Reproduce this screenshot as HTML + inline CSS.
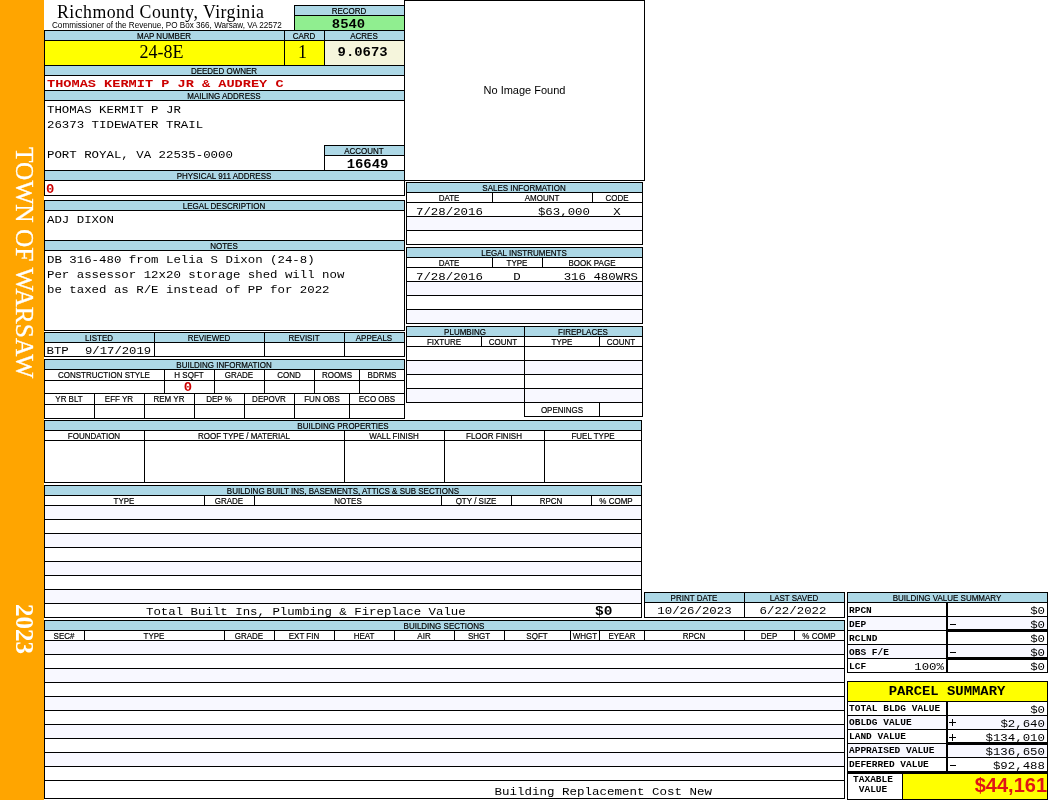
<!DOCTYPE html>
<html><head><meta charset="utf-8"><title>Property Card</title>
<style>
html,body{margin:0;padding:0;background:#fff;overflow:hidden;}
body{width:1050px;height:800px;position:relative;overflow:hidden;font-family:"Liberation Sans",sans-serif;color:#000;}
#pg{position:absolute;left:0;top:0;width:1050px;height:800px;will-change:transform;overflow:hidden;}
.b{position:absolute;box-sizing:border-box;border:1px solid #000;}
.f{position:absolute;}
.t{position:absolute;white-space:nowrap;}
.sans{font-family:"Liberation Sans",sans-serif;}
.serif{font-family:"Liberation Serif",serif;}
.mono{font-family:"Liberation Mono",monospace;}
.v{position:absolute;writing-mode:vertical-rl;font-family:"Liberation Serif",serif;color:#fff;white-space:nowrap;line-height:24px;}
</style></head><body><div id="pg">
<div class="f" style="left:0px;top:0px;width:44px;height:800px;background:#ffa500"></div>
<div class="v" style="left:13px;top:147px;font-size:25.4px;-webkit-text-stroke:0.3px #fff;">TOWN OF WARSAW</div>
<div class="v" style="left:12px;top:604px;font-size:25px;font-weight:bold;">2023</div>
<div class="t serif" style="top:2px;font-size:17.8px;line-height:20px;height:20px;letter-spacing:0.45px;left:57px;">Richmond County, Virginia</div>
<div class="t sans" style="top:21px;font-size:8.15px;line-height:9px;height:9px;left:52px;">Commissioner of the Revenue, PO Box 366, Warsaw, VA 22572</div>
<div class="b" style="left:294px;top:5px;width:111px;height:26px;background:#90ee90;"></div>
<div class="b" style="left:294px;top:5px;width:111px;height:11px;background:#add8e6;"></div>
<div class="t sans" style="top:6px;font-size:9.2px;line-height:10px;height:10px;transform:scaleX(0.87);transform-origin:50% 8px;left:49.0px;width:600px;text-align:center;-webkit-text-stroke:0.2px #000;">RECORD</div>
<div class="t mono" style="top:16px;font-size:13.9px;line-height:16px;height:16px;font-weight:bold;transform:scaleY(0.9);transform-origin:0 12px;left:48.5px;width:600px;text-align:center;">8540</div>
<div class="b" style="left:44px;top:30px;width:241px;height:11px;background:#add8e6;"></div>
<div class="t sans" style="top:31px;font-size:9.2px;line-height:10px;height:10px;transform:scaleX(0.87);transform-origin:50% 8px;left:-136.0px;width:600px;text-align:center;-webkit-text-stroke:0.2px #000;">MAP NUMBER</div>
<div class="b" style="left:284px;top:30px;width:41px;height:11px;background:#add8e6;"></div>
<div class="t sans" style="top:31px;font-size:9.2px;line-height:10px;height:10px;transform:scaleX(0.87);transform-origin:50% 8px;left:4.0px;width:600px;text-align:center;-webkit-text-stroke:0.2px #000;">CARD</div>
<div class="b" style="left:324px;top:30px;width:81px;height:11px;background:#add8e6;"></div>
<div class="t sans" style="top:31px;font-size:9.2px;line-height:10px;height:10px;transform:scaleX(0.87);transform-origin:50% 8px;left:64.0px;width:600px;text-align:center;-webkit-text-stroke:0.2px #000;">ACRES</div>
<div class="b" style="left:44px;top:40px;width:241px;height:26px;background:#ffff00;"></div>
<div class="b" style="left:284px;top:40px;width:41px;height:26px;background:#ffff00;"></div>
<div class="b" style="left:324px;top:40px;width:81px;height:26px;background:#f5f5dc;"></div>
<div class="t serif" style="top:42px;font-size:18px;line-height:20px;height:20px;left:-138.5px;width:600px;text-align:center;">24-8E</div>
<div class="t serif" style="top:42px;font-size:18px;line-height:20px;height:20px;left:2.5px;width:600px;text-align:center;">1</div>
<div class="t mono" style="top:44px;font-size:13.9px;line-height:16px;height:16px;font-weight:bold;transform:scaleY(0.9);transform-origin:0 12px;left:62.60000000000002px;width:600px;text-align:center;">9.0673</div>
<div class="b" style="left:44px;top:65px;width:361px;height:11px;background:#add8e6;"></div>
<div class="t sans" style="top:66px;font-size:9.2px;line-height:10px;height:10px;transform:scaleX(0.87);transform-origin:50% 8px;left:-76.0px;width:600px;text-align:center;-webkit-text-stroke:0.2px #000;">DEEDED OWNER</div>
<div class="b" style="left:44px;top:75px;width:361px;height:16px;background:#fff;"></div>
<div class="t mono" style="top:76px;font-size:13.6px;line-height:15px;height:15px;font-weight:bold;color:#cc0000;transform:scaleY(0.87);transform-origin:0 11px;left:47px;">THOMAS&nbsp;KERMIT&nbsp;P&nbsp;JR&nbsp;&amp;&nbsp;AUDREY&nbsp;C</div>
<div class="b" style="left:44px;top:90px;width:361px;height:11px;background:#add8e6;"></div>
<div class="t sans" style="top:91px;font-size:9.2px;line-height:10px;height:10px;transform:scaleX(0.87);transform-origin:50% 8px;left:-76.0px;width:600px;text-align:center;-webkit-text-stroke:0.2px #000;">MAILING ADDRESS</div>
<div class="b" style="left:44px;top:100px;width:361px;height:71px;background:#fff;"></div>
<div class="t mono" style="top:103px;font-size:12.4px;line-height:14px;height:14px;transform:scaleY(0.9);transform-origin:0 10px;left:47px;">THOMAS&nbsp;KERMIT&nbsp;P&nbsp;JR</div>
<div class="t mono" style="top:118px;font-size:12.4px;line-height:14px;height:14px;transform:scaleY(0.9);transform-origin:0 10px;left:47px;">26373&nbsp;TIDEWATER&nbsp;TRAIL</div>
<div class="t mono" style="top:148px;font-size:12.4px;line-height:14px;height:14px;transform:scaleY(0.9);transform-origin:0 10px;left:47px;">PORT&nbsp;ROYAL,&nbsp;VA&nbsp;22535-0000</div>
<div class="b" style="left:324px;top:145px;width:81px;height:26px;background:#fff;"></div>
<div class="b" style="left:324px;top:145px;width:81px;height:11px;background:#add8e6;"></div>
<div class="t sans" style="top:146px;font-size:9.2px;line-height:10px;height:10px;transform:scaleX(0.87);transform-origin:50% 8px;left:64.0px;width:600px;text-align:center;-webkit-text-stroke:0.2px #000;">ACCOUNT</div>
<div class="t mono" style="top:156px;font-size:13.9px;line-height:16px;height:16px;font-weight:bold;transform:scaleY(0.9);transform-origin:0 12px;left:67.5px;width:600px;text-align:center;">16649</div>
<div class="b" style="left:44px;top:170px;width:361px;height:11px;background:#add8e6;"></div>
<div class="t sans" style="top:171px;font-size:9.2px;line-height:10px;height:10px;transform:scaleX(0.87);transform-origin:50% 8px;left:-76.0px;width:600px;text-align:center;-webkit-text-stroke:0.2px #000;">PHYSICAL 911 ADDRESS</div>
<div class="b" style="left:44px;top:180px;width:361px;height:16px;background:#fff;"></div>
<div class="t mono" style="top:181px;font-size:13.9px;line-height:16px;height:16px;font-weight:bold;color:#cc0000;transform:scaleY(0.9);transform-origin:0 12px;left:46px;">0</div>
<div class="b" style="left:44px;top:200px;width:361px;height:41px;background:#fff;"></div>
<div class="b" style="left:44px;top:200px;width:361px;height:11px;background:#add8e6;"></div>
<div class="t sans" style="top:201px;font-size:9.2px;line-height:10px;height:10px;transform:scaleX(0.87);transform-origin:50% 8px;left:-76.0px;width:600px;text-align:center;-webkit-text-stroke:0.2px #000;">LEGAL DESCRIPTION</div>
<div class="t mono" style="top:212.5px;font-size:12.4px;line-height:14px;height:14px;transform:scaleY(0.9);transform-origin:0 10px;left:47px;">ADJ&nbsp;DIXON</div>
<div class="b" style="left:44px;top:240px;width:361px;height:91px;background:#fff;"></div>
<div class="b" style="left:44px;top:240px;width:361px;height:11px;background:#add8e6;"></div>
<div class="t sans" style="top:241px;font-size:9.2px;line-height:10px;height:10px;transform:scaleX(0.87);transform-origin:50% 8px;left:-76.0px;width:600px;text-align:center;-webkit-text-stroke:0.2px #000;">NOTES</div>
<div class="t mono" style="top:253px;font-size:12.4px;line-height:14px;height:14px;transform:scaleY(0.9);transform-origin:0 10px;left:47px;">DB&nbsp;316-480&nbsp;from&nbsp;Lelia&nbsp;S&nbsp;Dixon&nbsp;(24-8)</div>
<div class="t mono" style="top:268px;font-size:12.4px;line-height:14px;height:14px;transform:scaleY(0.9);transform-origin:0 10px;left:47px;">Per&nbsp;assessor&nbsp;12x20&nbsp;storage&nbsp;shed&nbsp;will&nbsp;now</div>
<div class="t mono" style="top:283px;font-size:12.4px;line-height:14px;height:14px;transform:scaleY(0.9);transform-origin:0 10px;left:47px;">be&nbsp;taxed&nbsp;as&nbsp;R/E&nbsp;instead&nbsp;of&nbsp;PP&nbsp;for&nbsp;2022</div>
<div class="b" style="left:44px;top:332px;width:111px;height:11px;background:#add8e6;"></div>
<div class="t sans" style="top:333px;font-size:9.2px;line-height:10px;height:10px;transform:scaleX(0.87);transform-origin:50% 8px;left:-201.0px;width:600px;text-align:center;-webkit-text-stroke:0.2px #000;">LISTED</div>
<div class="b" style="left:44px;top:342px;width:111px;height:15px;background:#fff;"></div>
<div class="b" style="left:154px;top:332px;width:111px;height:11px;background:#add8e6;"></div>
<div class="t sans" style="top:333px;font-size:9.2px;line-height:10px;height:10px;transform:scaleX(0.87);transform-origin:50% 8px;left:-91.0px;width:600px;text-align:center;-webkit-text-stroke:0.2px #000;">REVIEWED</div>
<div class="b" style="left:154px;top:342px;width:111px;height:15px;background:#fff;"></div>
<div class="b" style="left:264px;top:332px;width:81px;height:11px;background:#add8e6;"></div>
<div class="t sans" style="top:333px;font-size:9.2px;line-height:10px;height:10px;transform:scaleX(0.87);transform-origin:50% 8px;left:4.0px;width:600px;text-align:center;-webkit-text-stroke:0.2px #000;">REVISIT</div>
<div class="b" style="left:264px;top:342px;width:81px;height:15px;background:#fff;"></div>
<div class="b" style="left:344px;top:332px;width:61px;height:11px;background:#add8e6;"></div>
<div class="t sans" style="top:333px;font-size:9.2px;line-height:10px;height:10px;transform:scaleX(0.87);transform-origin:50% 8px;left:74.0px;width:600px;text-align:center;-webkit-text-stroke:0.2px #000;">APPEALS</div>
<div class="b" style="left:344px;top:342px;width:61px;height:15px;background:#fff;"></div>
<div class="t mono" style="top:344px;font-size:12.4px;line-height:14px;height:14px;transform:scaleY(0.9);transform-origin:0 10px;left:46.5px;">BTP</div>
<div class="t mono" style="top:344px;font-size:12.25px;line-height:14px;height:14px;transform:scaleY(0.9);transform-origin:0 10px;left:85px;">9/17/2019</div>
<div class="b" style="left:44px;top:359px;width:361px;height:11px;background:#add8e6;"></div>
<div class="t sans" style="top:360px;font-size:9.2px;line-height:10px;height:10px;transform:scaleX(0.87);transform-origin:50% 8px;left:-76.0px;width:600px;text-align:center;-webkit-text-stroke:0.2px #000;">BUILDING INFORMATION</div>
<div class="b" style="left:44px;top:369px;width:121px;height:12px;background:#fff;"></div>
<div class="t sans" style="top:370px;font-size:9.2px;line-height:10px;height:10px;transform:scaleX(0.87);transform-origin:50% 8px;left:-196.0px;width:600px;text-align:center;-webkit-text-stroke:0.2px #000;">CONSTRUCTION STYLE</div>
<div class="b" style="left:44px;top:380px;width:121px;height:14px;background:#fff;"></div>
<div class="b" style="left:164px;top:369px;width:51px;height:12px;background:#fff;"></div>
<div class="t sans" style="top:370px;font-size:9.2px;line-height:10px;height:10px;transform:scaleX(0.87);transform-origin:50% 8px;left:-111.0px;width:600px;text-align:center;-webkit-text-stroke:0.2px #000;">H SQFT</div>
<div class="b" style="left:164px;top:380px;width:51px;height:14px;background:#fff;"></div>
<div class="b" style="left:214px;top:369px;width:51px;height:12px;background:#fff;"></div>
<div class="t sans" style="top:370px;font-size:9.2px;line-height:10px;height:10px;transform:scaleX(0.87);transform-origin:50% 8px;left:-61.0px;width:600px;text-align:center;-webkit-text-stroke:0.2px #000;">GRADE</div>
<div class="b" style="left:214px;top:380px;width:51px;height:14px;background:#fff;"></div>
<div class="b" style="left:264px;top:369px;width:51px;height:12px;background:#fff;"></div>
<div class="t sans" style="top:370px;font-size:9.2px;line-height:10px;height:10px;transform:scaleX(0.87);transform-origin:50% 8px;left:-11.0px;width:600px;text-align:center;-webkit-text-stroke:0.2px #000;">COND</div>
<div class="b" style="left:264px;top:380px;width:51px;height:14px;background:#fff;"></div>
<div class="b" style="left:314px;top:369px;width:46px;height:12px;background:#fff;"></div>
<div class="t sans" style="top:370px;font-size:9.2px;line-height:10px;height:10px;transform:scaleX(0.87);transform-origin:50% 8px;left:36.5px;width:600px;text-align:center;-webkit-text-stroke:0.2px #000;">ROOMS</div>
<div class="b" style="left:314px;top:380px;width:46px;height:14px;background:#fff;"></div>
<div class="b" style="left:359px;top:369px;width:46px;height:12px;background:#fff;"></div>
<div class="t sans" style="top:370px;font-size:9.2px;line-height:10px;height:10px;transform:scaleX(0.87);transform-origin:50% 8px;left:81.5px;width:600px;text-align:center;-webkit-text-stroke:0.2px #000;">BDRMS</div>
<div class="b" style="left:359px;top:380px;width:46px;height:14px;background:#fff;"></div>
<div class="t mono" style="top:379px;font-size:13.9px;line-height:16px;height:16px;font-weight:bold;color:#cc0000;transform:scaleY(0.9);transform-origin:0 12px;left:-112px;width:600px;text-align:center;">0</div>
<div class="b" style="left:44px;top:393px;width:51px;height:12px;background:#fff;"></div>
<div class="t sans" style="top:394px;font-size:9.2px;line-height:10px;height:10px;transform:scaleX(0.87);transform-origin:50% 8px;left:-231.0px;width:600px;text-align:center;-webkit-text-stroke:0.2px #000;">YR BLT</div>
<div class="b" style="left:44px;top:404px;width:51px;height:15px;background:#fff;"></div>
<div class="b" style="left:94px;top:393px;width:51px;height:12px;background:#fff;"></div>
<div class="t sans" style="top:394px;font-size:9.2px;line-height:10px;height:10px;transform:scaleX(0.87);transform-origin:50% 8px;left:-181.0px;width:600px;text-align:center;-webkit-text-stroke:0.2px #000;">EFF YR</div>
<div class="b" style="left:94px;top:404px;width:51px;height:15px;background:#fff;"></div>
<div class="b" style="left:144px;top:393px;width:51px;height:12px;background:#fff;"></div>
<div class="t sans" style="top:394px;font-size:9.2px;line-height:10px;height:10px;transform:scaleX(0.87);transform-origin:50% 8px;left:-131.0px;width:600px;text-align:center;-webkit-text-stroke:0.2px #000;">REM YR</div>
<div class="b" style="left:144px;top:404px;width:51px;height:15px;background:#fff;"></div>
<div class="b" style="left:194px;top:393px;width:51px;height:12px;background:#fff;"></div>
<div class="t sans" style="top:394px;font-size:9.2px;line-height:10px;height:10px;transform:scaleX(0.87);transform-origin:50% 8px;left:-81.0px;width:600px;text-align:center;-webkit-text-stroke:0.2px #000;">DEP %</div>
<div class="b" style="left:194px;top:404px;width:51px;height:15px;background:#fff;"></div>
<div class="b" style="left:244px;top:393px;width:51px;height:12px;background:#fff;"></div>
<div class="t sans" style="top:394px;font-size:9.2px;line-height:10px;height:10px;transform:scaleX(0.87);transform-origin:50% 8px;left:-31.0px;width:600px;text-align:center;-webkit-text-stroke:0.2px #000;">DEPOVR</div>
<div class="b" style="left:244px;top:404px;width:51px;height:15px;background:#fff;"></div>
<div class="b" style="left:294px;top:393px;width:56px;height:12px;background:#fff;"></div>
<div class="t sans" style="top:394px;font-size:9.2px;line-height:10px;height:10px;transform:scaleX(0.87);transform-origin:50% 8px;left:21.5px;width:600px;text-align:center;-webkit-text-stroke:0.2px #000;">FUN OBS</div>
<div class="b" style="left:294px;top:404px;width:56px;height:15px;background:#fff;"></div>
<div class="b" style="left:349px;top:393px;width:56px;height:12px;background:#fff;"></div>
<div class="t sans" style="top:394px;font-size:9.2px;line-height:10px;height:10px;transform:scaleX(0.87);transform-origin:50% 8px;left:76.5px;width:600px;text-align:center;-webkit-text-stroke:0.2px #000;">ECO OBS</div>
<div class="b" style="left:349px;top:404px;width:56px;height:15px;background:#fff;"></div>
<div class="b" style="left:404px;top:0px;width:241px;height:181px;background:#fff;"></div>
<div class="t sans" style="top:84px;font-size:11px;line-height:12px;height:12px;left:224.5px;width:600px;text-align:center;">No Image Found</div>
<div class="b" style="left:406px;top:182px;width:237px;height:11px;background:#add8e6;"></div>
<div class="t sans" style="top:183px;font-size:9.2px;line-height:10px;height:10px;transform:scaleX(0.87);transform-origin:50% 8px;left:224.0px;width:600px;text-align:center;-webkit-text-stroke:0.2px #000;">SALES INFORMATION</div>
<div class="b" style="left:406px;top:192px;width:87px;height:11px;background:#fff;"></div>
<div class="t sans" style="top:193px;font-size:9.2px;line-height:10px;height:10px;transform:scaleX(0.87);transform-origin:50% 8px;left:149.0px;width:600px;text-align:center;-webkit-text-stroke:0.2px #000;">DATE</div>
<div class="b" style="left:492px;top:192px;width:101px;height:11px;background:#fff;"></div>
<div class="t sans" style="top:193px;font-size:9.2px;line-height:10px;height:10px;transform:scaleX(0.87);transform-origin:50% 8px;left:242.0px;width:600px;text-align:center;-webkit-text-stroke:0.2px #000;">AMOUNT</div>
<div class="b" style="left:592px;top:192px;width:51px;height:11px;background:#fff;"></div>
<div class="t sans" style="top:193px;font-size:9.2px;line-height:10px;height:10px;transform:scaleX(0.87);transform-origin:50% 8px;left:317.0px;width:600px;text-align:center;-webkit-text-stroke:0.2px #000;">CODE</div>
<div class="b" style="left:406px;top:202px;width:237px;height:15px;background:#fff;"></div>
<div class="b" style="left:406px;top:216px;width:237px;height:15px;background:#f8f8ff;"></div>
<div class="b" style="left:406px;top:230px;width:237px;height:15px;background:#fff;"></div>
<div class="t mono" style="top:205px;font-size:12.4px;line-height:14px;height:14px;transform:scaleY(0.9);transform-origin:0 10px;left:416px;">7/28/2016</div>
<div class="t mono" style="top:205px;font-size:12.4px;line-height:14px;height:14px;transform:scaleY(0.9);transform-origin:0 10px;left:-10px;width:600px;text-align:right;">$63,000</div>
<div class="t mono" style="top:205px;font-size:12.4px;line-height:14px;height:14px;transform:scaleY(0.9);transform-origin:0 10px;left:317px;width:600px;text-align:center;">X</div>
<div class="b" style="left:406px;top:247px;width:237px;height:11px;background:#add8e6;"></div>
<div class="t sans" style="top:248px;font-size:9.2px;line-height:10px;height:10px;transform:scaleX(0.87);transform-origin:50% 8px;left:224.0px;width:600px;text-align:center;-webkit-text-stroke:0.2px #000;">LEGAL INSTRUMENTS</div>
<div class="b" style="left:406px;top:257px;width:87px;height:11px;background:#fff;"></div>
<div class="t sans" style="top:258px;font-size:9.2px;line-height:10px;height:10px;transform:scaleX(0.87);transform-origin:50% 8px;left:149.0px;width:600px;text-align:center;-webkit-text-stroke:0.2px #000;">DATE</div>
<div class="b" style="left:492px;top:257px;width:51px;height:11px;background:#fff;"></div>
<div class="t sans" style="top:258px;font-size:9.2px;line-height:10px;height:10px;transform:scaleX(0.87);transform-origin:50% 8px;left:217.0px;width:600px;text-align:center;-webkit-text-stroke:0.2px #000;">TYPE</div>
<div class="b" style="left:542px;top:257px;width:101px;height:11px;background:#fff;"></div>
<div class="t sans" style="top:258px;font-size:9.2px;line-height:10px;height:10px;transform:scaleX(0.87);transform-origin:50% 8px;left:292.0px;width:600px;text-align:center;-webkit-text-stroke:0.2px #000;">BOOK PAGE</div>
<div class="b" style="left:406px;top:267px;width:237px;height:15px;background:#fff;"></div>
<div class="b" style="left:406px;top:281px;width:237px;height:15px;background:#f8f8ff;"></div>
<div class="b" style="left:406px;top:295px;width:237px;height:15px;background:#fff;"></div>
<div class="b" style="left:406px;top:309px;width:237px;height:15px;background:#f8f8ff;"></div>
<div class="t mono" style="top:270px;font-size:12.4px;line-height:14px;height:14px;transform:scaleY(0.9);transform-origin:0 10px;left:416px;">7/28/2016</div>
<div class="t mono" style="top:270px;font-size:12.4px;line-height:14px;height:14px;transform:scaleY(0.9);transform-origin:0 10px;left:217px;width:600px;text-align:center;">D</div>
<div class="t mono" style="top:270px;font-size:12.4px;line-height:14px;height:14px;transform:scaleY(0.9);transform-origin:0 10px;left:38px;width:600px;text-align:right;">316&nbsp;480WRS</div>
<div class="b" style="left:406px;top:326px;width:119px;height:11px;background:#add8e6;"></div>
<div class="t sans" style="top:327px;font-size:9.2px;line-height:10px;height:10px;transform:scaleX(0.87);transform-origin:50% 8px;left:165.0px;width:600px;text-align:center;-webkit-text-stroke:0.2px #000;">PLUMBING</div>
<div class="b" style="left:524px;top:326px;width:119px;height:11px;background:#add8e6;"></div>
<div class="t sans" style="top:327px;font-size:9.2px;line-height:10px;height:10px;transform:scaleX(0.87);transform-origin:50% 8px;left:283.0px;width:600px;text-align:center;-webkit-text-stroke:0.2px #000;">FIREPLACES</div>
<div class="b" style="left:406px;top:336px;width:76px;height:11px;background:#fff;"></div>
<div class="t sans" style="top:337px;font-size:9.2px;line-height:10px;height:10px;transform:scaleX(0.87);transform-origin:50% 8px;left:143.5px;width:600px;text-align:center;-webkit-text-stroke:0.2px #000;">FIXTURE</div>
<div class="b" style="left:481px;top:336px;width:44px;height:11px;background:#fff;"></div>
<div class="t sans" style="top:337px;font-size:9.2px;line-height:10px;height:10px;transform:scaleX(0.87);transform-origin:50% 8px;left:202.5px;width:600px;text-align:center;-webkit-text-stroke:0.2px #000;">COUNT</div>
<div class="b" style="left:524px;top:336px;width:76px;height:11px;background:#fff;"></div>
<div class="t sans" style="top:337px;font-size:9.2px;line-height:10px;height:10px;transform:scaleX(0.87);transform-origin:50% 8px;left:261.5px;width:600px;text-align:center;-webkit-text-stroke:0.2px #000;">TYPE</div>
<div class="b" style="left:599px;top:336px;width:44px;height:11px;background:#fff;"></div>
<div class="t sans" style="top:337px;font-size:9.2px;line-height:10px;height:10px;transform:scaleX(0.87);transform-origin:50% 8px;left:320.5px;width:600px;text-align:center;-webkit-text-stroke:0.2px #000;">COUNT</div>
<div class="b" style="left:406px;top:346px;width:119px;height:15px;background:#fff;"></div>
<div class="b" style="left:406px;top:360px;width:119px;height:15px;background:#f8f8ff;"></div>
<div class="b" style="left:406px;top:374px;width:119px;height:15px;background:#fff;"></div>
<div class="b" style="left:406px;top:388px;width:119px;height:15px;background:#f8f8ff;"></div>
<div class="b" style="left:524px;top:346px;width:119px;height:15px;background:#fff;"></div>
<div class="b" style="left:524px;top:360px;width:119px;height:15px;background:#f8f8ff;"></div>
<div class="b" style="left:524px;top:374px;width:119px;height:15px;background:#fff;"></div>
<div class="b" style="left:524px;top:388px;width:119px;height:15px;background:#f8f8ff;"></div>
<div class="b" style="left:524px;top:402px;width:76px;height:15px;background:#fff;"></div>
<div class="b" style="left:599px;top:402px;width:44px;height:15px;background:#fff;"></div>
<div class="t sans" style="top:405px;font-size:9.2px;line-height:10px;height:10px;transform:scaleX(0.87);transform-origin:50% 8px;left:262px;width:600px;text-align:center;-webkit-text-stroke:0.2px #000;">OPENINGS</div>
<div class="b" style="left:44px;top:420px;width:598px;height:11px;background:#add8e6;"></div>
<div class="t sans" style="top:421px;font-size:9.2px;line-height:10px;height:10px;transform:scaleX(0.87);transform-origin:50% 8px;left:42.5px;width:600px;text-align:center;-webkit-text-stroke:0.2px #000;">BUILDING PROPERTIES</div>
<div class="b" style="left:44px;top:430px;width:101px;height:11px;background:#fff;"></div>
<div class="t sans" style="top:431px;font-size:9.2px;line-height:10px;height:10px;transform:scaleX(0.87);transform-origin:50% 8px;left:-206.0px;width:600px;text-align:center;-webkit-text-stroke:0.2px #000;">FOUNDATION</div>
<div class="b" style="left:44px;top:440px;width:101px;height:43px;background:#fff;"></div>
<div class="b" style="left:144px;top:430px;width:201px;height:11px;background:#fff;"></div>
<div class="t sans" style="top:431px;font-size:9.2px;line-height:10px;height:10px;transform:scaleX(0.87);transform-origin:50% 8px;left:-56.0px;width:600px;text-align:center;-webkit-text-stroke:0.2px #000;">ROOF TYPE / MATERIAL</div>
<div class="b" style="left:144px;top:440px;width:201px;height:43px;background:#fff;"></div>
<div class="b" style="left:344px;top:430px;width:101px;height:11px;background:#fff;"></div>
<div class="t sans" style="top:431px;font-size:9.2px;line-height:10px;height:10px;transform:scaleX(0.87);transform-origin:50% 8px;left:94.0px;width:600px;text-align:center;-webkit-text-stroke:0.2px #000;">WALL FINISH</div>
<div class="b" style="left:344px;top:440px;width:101px;height:43px;background:#fff;"></div>
<div class="b" style="left:444px;top:430px;width:101px;height:11px;background:#fff;"></div>
<div class="t sans" style="top:431px;font-size:9.2px;line-height:10px;height:10px;transform:scaleX(0.87);transform-origin:50% 8px;left:194.0px;width:600px;text-align:center;-webkit-text-stroke:0.2px #000;">FLOOR FINISH</div>
<div class="b" style="left:444px;top:440px;width:101px;height:43px;background:#fff;"></div>
<div class="b" style="left:544px;top:430px;width:98px;height:11px;background:#fff;"></div>
<div class="t sans" style="top:431px;font-size:9.2px;line-height:10px;height:10px;transform:scaleX(0.87);transform-origin:50% 8px;left:292.5px;width:600px;text-align:center;-webkit-text-stroke:0.2px #000;">FUEL TYPE</div>
<div class="b" style="left:544px;top:440px;width:98px;height:43px;background:#fff;"></div>
<div class="b" style="left:44px;top:485px;width:598px;height:11px;background:#add8e6;"></div>
<div class="t sans" style="top:486px;font-size:9.2px;line-height:10px;height:10px;transform:scaleX(0.87);transform-origin:50% 8px;left:42.5px;width:600px;text-align:center;-webkit-text-stroke:0.2px #000;">BUILDING BUILT INS, BASEMENTS, ATTICS &amp; SUB SECTIONS</div>
<div class="b" style="left:44px;top:495px;width:161px;height:11px;background:#fff;"></div>
<div class="t sans" style="top:496px;font-size:9.2px;line-height:10px;height:10px;transform:scaleX(0.87);transform-origin:50% 8px;left:-176.0px;width:600px;text-align:center;-webkit-text-stroke:0.2px #000;">TYPE</div>
<div class="b" style="left:204px;top:495px;width:51px;height:11px;background:#fff;"></div>
<div class="t sans" style="top:496px;font-size:9.2px;line-height:10px;height:10px;transform:scaleX(0.87);transform-origin:50% 8px;left:-71.0px;width:600px;text-align:center;-webkit-text-stroke:0.2px #000;">GRADE</div>
<div class="b" style="left:254px;top:495px;width:188px;height:11px;background:#fff;"></div>
<div class="t sans" style="top:496px;font-size:9.2px;line-height:10px;height:10px;transform:scaleX(0.87);transform-origin:50% 8px;left:47.5px;width:600px;text-align:center;-webkit-text-stroke:0.2px #000;">NOTES</div>
<div class="b" style="left:441px;top:495px;width:71px;height:11px;background:#fff;"></div>
<div class="t sans" style="top:496px;font-size:9.2px;line-height:10px;height:10px;transform:scaleX(0.87);transform-origin:50% 8px;left:176.0px;width:600px;text-align:center;-webkit-text-stroke:0.2px #000;">QTY / SIZE</div>
<div class="b" style="left:511px;top:495px;width:81px;height:11px;background:#fff;"></div>
<div class="t sans" style="top:496px;font-size:9.2px;line-height:10px;height:10px;transform:scaleX(0.87);transform-origin:50% 8px;left:251.0px;width:600px;text-align:center;-webkit-text-stroke:0.2px #000;">RPCN</div>
<div class="b" style="left:591px;top:495px;width:51px;height:11px;background:#fff;"></div>
<div class="t sans" style="top:496px;font-size:9.2px;line-height:10px;height:10px;transform:scaleX(0.87);transform-origin:50% 8px;left:316.0px;width:600px;text-align:center;-webkit-text-stroke:0.2px #000;">% COMP</div>
<div class="b" style="left:44px;top:505px;width:598px;height:15px;background:#f8f8ff;"></div>
<div class="b" style="left:44px;top:519px;width:598px;height:15px;background:#fff;"></div>
<div class="b" style="left:44px;top:533px;width:598px;height:15px;background:#f8f8ff;"></div>
<div class="b" style="left:44px;top:547px;width:598px;height:15px;background:#fff;"></div>
<div class="b" style="left:44px;top:561px;width:598px;height:15px;background:#f8f8ff;"></div>
<div class="b" style="left:44px;top:575px;width:598px;height:15px;background:#fff;"></div>
<div class="b" style="left:44px;top:589px;width:598px;height:15px;background:#f8f8ff;"></div>
<div class="b" style="left:44px;top:603px;width:598px;height:15px;background:#fff;"></div>
<div class="t mono" style="top:605px;font-size:12.4px;line-height:14px;height:14px;transform:scaleY(0.9);transform-origin:0 10px;left:146px;">Total&nbsp;Built&nbsp;Ins,&nbsp;Plumbing&nbsp;&amp;&nbsp;Fireplace&nbsp;Value</div>
<div class="t mono" style="top:603px;font-size:14.5px;line-height:16px;height:16px;font-weight:bold;transform:scaleY(0.88);transform-origin:0 12px;left:595px;">$0</div>
<div class="b" style="left:644px;top:592px;width:101px;height:11px;background:#add8e6;"></div>
<div class="t sans" style="top:593px;font-size:9.2px;line-height:10px;height:10px;transform:scaleX(0.87);transform-origin:50% 8px;left:394.0px;width:600px;text-align:center;-webkit-text-stroke:0.2px #000;">PRINT DATE</div>
<div class="b" style="left:744px;top:592px;width:101px;height:11px;background:#add8e6;"></div>
<div class="t sans" style="top:593px;font-size:9.2px;line-height:10px;height:10px;transform:scaleX(0.87);transform-origin:50% 8px;left:494.0px;width:600px;text-align:center;-webkit-text-stroke:0.2px #000;">LAST SAVED</div>
<div class="b" style="left:644px;top:602px;width:101px;height:16px;background:#fff;"></div>
<div class="b" style="left:744px;top:602px;width:101px;height:16px;background:#fff;"></div>
<div class="t mono" style="top:604px;font-size:12.4px;line-height:14px;height:14px;transform:scaleY(0.9);transform-origin:0 10px;left:394.5px;width:600px;text-align:center;">10/26/2023</div>
<div class="t mono" style="top:604px;font-size:12.4px;line-height:14px;height:14px;transform:scaleY(0.9);transform-origin:0 10px;left:493px;width:600px;text-align:center;">6/22/2022</div>
<div class="b" style="left:44px;top:620px;width:801px;height:11px;background:#add8e6;"></div>
<div class="t sans" style="top:621px;font-size:9.2px;line-height:10px;height:10px;transform:scaleX(0.87);transform-origin:50% 8px;left:144.0px;width:600px;text-align:center;-webkit-text-stroke:0.2px #000;">BUILDING SECTIONS</div>
<div class="b" style="left:44px;top:630px;width:41px;height:11px;background:#fff;"></div>
<div class="t sans" style="top:631px;font-size:9.2px;line-height:10px;height:10px;transform:scaleX(0.87);transform-origin:50% 8px;left:-236.0px;width:600px;text-align:center;-webkit-text-stroke:0.2px #000;">SEC#</div>
<div class="b" style="left:84px;top:630px;width:141px;height:11px;background:#fff;"></div>
<div class="t sans" style="top:631px;font-size:9.2px;line-height:10px;height:10px;transform:scaleX(0.87);transform-origin:50% 8px;left:-146.0px;width:600px;text-align:center;-webkit-text-stroke:0.2px #000;">TYPE</div>
<div class="b" style="left:224px;top:630px;width:51px;height:11px;background:#fff;"></div>
<div class="t sans" style="top:631px;font-size:9.2px;line-height:10px;height:10px;transform:scaleX(0.87);transform-origin:50% 8px;left:-51.0px;width:600px;text-align:center;-webkit-text-stroke:0.2px #000;">GRADE</div>
<div class="b" style="left:274px;top:630px;width:61px;height:11px;background:#fff;"></div>
<div class="t sans" style="top:631px;font-size:9.2px;line-height:10px;height:10px;transform:scaleX(0.87);transform-origin:50% 8px;left:4.0px;width:600px;text-align:center;-webkit-text-stroke:0.2px #000;">EXT FIN</div>
<div class="b" style="left:334px;top:630px;width:61px;height:11px;background:#fff;"></div>
<div class="t sans" style="top:631px;font-size:9.2px;line-height:10px;height:10px;transform:scaleX(0.87);transform-origin:50% 8px;left:64.0px;width:600px;text-align:center;-webkit-text-stroke:0.2px #000;">HEAT</div>
<div class="b" style="left:394px;top:630px;width:61px;height:11px;background:#fff;"></div>
<div class="t sans" style="top:631px;font-size:9.2px;line-height:10px;height:10px;transform:scaleX(0.87);transform-origin:50% 8px;left:124.0px;width:600px;text-align:center;-webkit-text-stroke:0.2px #000;">AIR</div>
<div class="b" style="left:454px;top:630px;width:51px;height:11px;background:#fff;"></div>
<div class="t sans" style="top:631px;font-size:9.2px;line-height:10px;height:10px;transform:scaleX(0.87);transform-origin:50% 8px;left:179.0px;width:600px;text-align:center;-webkit-text-stroke:0.2px #000;">SHGT</div>
<div class="b" style="left:504px;top:630px;width:67px;height:11px;background:#fff;"></div>
<div class="t sans" style="top:631px;font-size:9.2px;line-height:10px;height:10px;transform:scaleX(0.87);transform-origin:50% 8px;left:237.0px;width:600px;text-align:center;-webkit-text-stroke:0.2px #000;">SQFT</div>
<div class="b" style="left:570px;top:630px;width:30px;height:11px;background:#fff;"></div>
<div class="t sans" style="top:631px;font-size:9.2px;line-height:10px;height:10px;transform:scaleX(0.87);transform-origin:50% 8px;left:284.5px;width:600px;text-align:center;-webkit-text-stroke:0.2px #000;">WHGT</div>
<div class="b" style="left:599px;top:630px;width:46px;height:11px;background:#fff;"></div>
<div class="t sans" style="top:631px;font-size:9.2px;line-height:10px;height:10px;transform:scaleX(0.87);transform-origin:50% 8px;left:321.5px;width:600px;text-align:center;-webkit-text-stroke:0.2px #000;">EYEAR</div>
<div class="b" style="left:644px;top:630px;width:101px;height:11px;background:#fff;"></div>
<div class="t sans" style="top:631px;font-size:9.2px;line-height:10px;height:10px;transform:scaleX(0.87);transform-origin:50% 8px;left:394.0px;width:600px;text-align:center;-webkit-text-stroke:0.2px #000;">RPCN</div>
<div class="b" style="left:744px;top:630px;width:51px;height:11px;background:#fff;"></div>
<div class="t sans" style="top:631px;font-size:9.2px;line-height:10px;height:10px;transform:scaleX(0.87);transform-origin:50% 8px;left:469.0px;width:600px;text-align:center;-webkit-text-stroke:0.2px #000;">DEP</div>
<div class="b" style="left:794px;top:630px;width:51px;height:11px;background:#fff;"></div>
<div class="t sans" style="top:631px;font-size:9.2px;line-height:10px;height:10px;transform:scaleX(0.87);transform-origin:50% 8px;left:519.0px;width:600px;text-align:center;-webkit-text-stroke:0.2px #000;">% COMP</div>
<div class="b" style="left:44px;top:640px;width:801px;height:15px;background:#f8f8ff;"></div>
<div class="b" style="left:44px;top:654px;width:801px;height:15px;background:#fff;"></div>
<div class="b" style="left:44px;top:668px;width:801px;height:15px;background:#f8f8ff;"></div>
<div class="b" style="left:44px;top:682px;width:801px;height:15px;background:#fff;"></div>
<div class="b" style="left:44px;top:696px;width:801px;height:15px;background:#f8f8ff;"></div>
<div class="b" style="left:44px;top:710px;width:801px;height:15px;background:#fff;"></div>
<div class="b" style="left:44px;top:724px;width:801px;height:15px;background:#f8f8ff;"></div>
<div class="b" style="left:44px;top:738px;width:801px;height:15px;background:#fff;"></div>
<div class="b" style="left:44px;top:752px;width:801px;height:15px;background:#f8f8ff;"></div>
<div class="b" style="left:44px;top:766px;width:801px;height:15px;background:#fff;"></div>
<div class="b" style="left:44px;top:780px;width:801px;height:19px;background:#fff;"></div>
<div class="t mono" style="top:785px;font-size:12.5px;line-height:14px;height:14px;transform:scaleY(0.9);transform-origin:0 10px;left:494.5px;">Building&nbsp;Replacement&nbsp;Cost&nbsp;New</div>
<div class="b" style="left:847px;top:592px;width:201px;height:11px;background:#add8e6;"></div>
<div class="t sans" style="top:593px;font-size:9.2px;line-height:10px;height:10px;transform:scaleX(0.87);transform-origin:50% 8px;left:647.0px;width:600px;text-align:center;-webkit-text-stroke:0.2px #000;">BUILDING VALUE SUMMARY</div>
<div class="b" style="left:847px;top:602px;width:101px;height:15px;background:#fff;"></div>
<div class="b" style="left:947px;top:602px;width:101px;height:15px;background:#fff;"></div>
<div class="t mono" style="top:605px;font-size:9.5px;line-height:11px;height:11px;font-weight:bold;transform:scaleY(0.96);transform-origin:0 8px;left:849px;">RPCN</div>
<div class="t mono" style="top:604px;font-size:12.4px;line-height:14px;height:14px;transform:scaleY(0.9);transform-origin:0 10px;left:445px;width:600px;text-align:right;">$0</div>
<div class="b" style="left:847px;top:616px;width:101px;height:15px;background:#f8f8ff;"></div>
<div class="b" style="left:947px;top:616px;width:101px;height:15px;background:#f8f8ff;"></div>
<div class="t mono" style="top:619px;font-size:9.5px;line-height:11px;height:11px;font-weight:bold;transform:scaleY(0.96);transform-origin:0 8px;left:849px;">DEP</div>
<div class="t mono" style="top:618px;font-size:12.4px;line-height:14px;height:14px;transform:scaleY(0.9);transform-origin:0 10px;left:445px;width:600px;text-align:right;">$0</div>
<div class="f" style="left:950px;top:624px;width:6px;height:1px;background:#000"></div>
<div class="b" style="left:847px;top:630px;width:101px;height:15px;background:#fff;"></div>
<div class="b" style="left:947px;top:630px;width:101px;height:15px;background:#fff;"></div>
<div class="t mono" style="top:633px;font-size:9.5px;line-height:11px;height:11px;font-weight:bold;transform:scaleY(0.96);transform-origin:0 8px;left:849px;">RCLND</div>
<div class="t mono" style="top:632px;font-size:12.4px;line-height:14px;height:14px;transform:scaleY(0.9);transform-origin:0 10px;left:445px;width:600px;text-align:right;">$0</div>
<div class="b" style="left:847px;top:644px;width:101px;height:15px;background:#f8f8ff;"></div>
<div class="b" style="left:947px;top:644px;width:101px;height:15px;background:#f8f8ff;"></div>
<div class="t mono" style="top:647px;font-size:9.5px;line-height:11px;height:11px;font-weight:bold;transform:scaleY(0.96);transform-origin:0 8px;left:849px;">OBS&nbsp;F/E</div>
<div class="t mono" style="top:646px;font-size:12.4px;line-height:14px;height:14px;transform:scaleY(0.9);transform-origin:0 10px;left:445px;width:600px;text-align:right;">$0</div>
<div class="f" style="left:950px;top:652px;width:6px;height:1px;background:#000"></div>
<div class="b" style="left:847px;top:658px;width:101px;height:15px;background:#fff;"></div>
<div class="b" style="left:947px;top:658px;width:101px;height:15px;background:#fff;"></div>
<div class="t mono" style="top:661px;font-size:9.5px;line-height:11px;height:11px;font-weight:bold;transform:scaleY(0.96);transform-origin:0 8px;left:849px;">LCF</div>
<div class="t mono" style="top:660px;font-size:12.4px;line-height:14px;height:14px;transform:scaleY(0.9);transform-origin:0 10px;left:445px;width:600px;text-align:right;">$0</div>
<div class="t mono" style="top:660px;font-size:12.4px;line-height:14px;height:14px;transform:scaleY(0.9);transform-origin:0 10px;left:344px;width:600px;text-align:right;">100%</div>
<div class="f" style="left:946px;top:602px;width:2px;height:71px;background:#000"></div>
<div class="f" style="left:947px;top:629px;width:101px;height:3px;background:#000"></div>
<div class="f" style="left:947px;top:657px;width:101px;height:3px;background:#000"></div>
<div class="b" style="left:847px;top:681px;width:201px;height:21px;background:#ffff00;"></div>
<div class="t mono" style="top:683px;font-size:13.9px;line-height:16px;height:16px;font-weight:bold;transform:scaleY(0.87);transform-origin:0 12px;left:647px;width:600px;text-align:center;">PARCEL&nbsp;SUMMARY</div>
<div class="b" style="left:847px;top:701px;width:101px;height:15px;background:#fff;"></div>
<div class="b" style="left:947px;top:701px;width:101px;height:15px;background:#fff;"></div>
<div class="t mono" style="top:703px;font-size:9.5px;line-height:11px;height:11px;font-weight:bold;transform:scaleY(0.96);transform-origin:0 8px;left:849px;">TOTAL&nbsp;BLDG&nbsp;VALUE</div>
<div class="t mono" style="top:703px;font-size:12.4px;line-height:14px;height:14px;transform:scaleY(0.9);transform-origin:0 10px;left:445px;width:600px;text-align:right;">$0</div>
<div class="b" style="left:847px;top:715px;width:101px;height:15px;background:#f8f8ff;"></div>
<div class="b" style="left:947px;top:715px;width:101px;height:15px;background:#f8f8ff;"></div>
<div class="t mono" style="top:717px;font-size:9.5px;line-height:11px;height:11px;font-weight:bold;transform:scaleY(0.96);transform-origin:0 8px;left:849px;">OBLDG&nbsp;VALUE</div>
<div class="t mono" style="top:717px;font-size:12.4px;line-height:14px;height:14px;transform:scaleY(0.9);transform-origin:0 10px;left:445px;width:600px;text-align:right;">$2,640</div>
<div class="f" style="left:949px;top:722px;width:7px;height:1px;background:#000"></div>
<div class="f" style="left:952px;top:719px;width:1px;height:7px;background:#000"></div>
<div class="b" style="left:847px;top:729px;width:101px;height:15px;background:#fff;"></div>
<div class="b" style="left:947px;top:729px;width:101px;height:15px;background:#fff;"></div>
<div class="t mono" style="top:731px;font-size:9.5px;line-height:11px;height:11px;font-weight:bold;transform:scaleY(0.96);transform-origin:0 8px;left:849px;">LAND&nbsp;VALUE</div>
<div class="t mono" style="top:731px;font-size:12.4px;line-height:14px;height:14px;transform:scaleY(0.9);transform-origin:0 10px;left:445px;width:600px;text-align:right;">$134,010</div>
<div class="f" style="left:949px;top:737px;width:7px;height:1px;background:#000"></div>
<div class="f" style="left:952px;top:734px;width:1px;height:7px;background:#000"></div>
<div class="b" style="left:847px;top:743px;width:101px;height:15px;background:#f8f8ff;"></div>
<div class="b" style="left:947px;top:743px;width:101px;height:15px;background:#f8f8ff;"></div>
<div class="t mono" style="top:745px;font-size:9.5px;line-height:11px;height:11px;font-weight:bold;transform:scaleY(0.96);transform-origin:0 8px;left:849px;">APPRAISED&nbsp;VALUE</div>
<div class="t mono" style="top:745px;font-size:12.4px;line-height:14px;height:14px;transform:scaleY(0.9);transform-origin:0 10px;left:445px;width:600px;text-align:right;">$136,650</div>
<div class="b" style="left:847px;top:757px;width:101px;height:15px;background:#fff;"></div>
<div class="b" style="left:947px;top:757px;width:101px;height:15px;background:#fff;"></div>
<div class="t mono" style="top:759px;font-size:9.5px;line-height:11px;height:11px;font-weight:bold;transform:scaleY(0.96);transform-origin:0 8px;left:849px;">DEFERRED&nbsp;VALUE</div>
<div class="t mono" style="top:759px;font-size:12.4px;line-height:14px;height:14px;transform:scaleY(0.9);transform-origin:0 10px;left:445px;width:600px;text-align:right;">$92,488</div>
<div class="f" style="left:950px;top:765px;width:6px;height:1px;background:#000"></div>
<div class="f" style="left:946px;top:701px;width:2px;height:71px;background:#000"></div>
<div class="f" style="left:947px;top:743px;width:101px;height:2px;background:#000"></div>
<div class="f" style="left:947px;top:742px;width:101px;height:1px;background:#000"></div>
<div class="b" style="left:847px;top:771px;width:56px;height:29px;background:#fff;"></div>
<div class="b" style="left:902px;top:771px;width:146px;height:29px;background:#ffff00;"></div>
<div class="f" style="left:847px;top:771px;width:201px;height:3px;background:#000"></div>
<div class="t mono" style="top:774px;font-size:9.5px;line-height:11px;height:11px;font-weight:bold;transform:scaleY(0.96);transform-origin:0 8px;left:573px;width:600px;text-align:center;">TAXABLE</div>
<div class="t mono" style="top:784px;font-size:9.5px;line-height:11px;height:11px;font-weight:bold;transform:scaleY(0.96);transform-origin:0 8px;left:573px;width:600px;text-align:center;">VALUE</div>
<div class="t sans" style="top:774px;font-size:20px;line-height:22px;height:22px;font-weight:bold;color:#e01515;left:447px;width:600px;text-align:right;">$44,161</div>
</div></body></html>
